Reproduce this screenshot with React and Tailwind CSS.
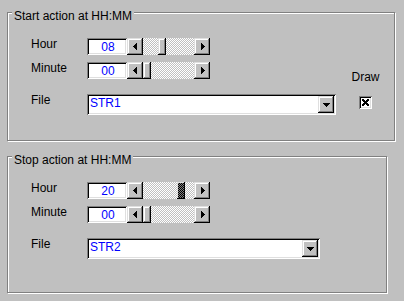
import React from 'react';

const raised =
  'shadow-[inset_-1px_-1px_0_#000,inset_1px_1px_0_#dfdfdf,inset_-2px_-2px_0_#808080,inset_2px_2px_0_#fff]';
const sunken =
  'shadow-[inset_1px_1px_0_#808080,inset_-1px_-1px_0_#fff,inset_2px_2px_0_#000,inset_-2px_-2px_0_#dfdfdf]';
const checker =
  'bg-[conic-gradient(#fff_25%,#c0c0c0_0_50%,#fff_0_75%,#c0c0c0_0)] bg-[length:2px_2px]';

function ArrowLeft() {
  return (
    <svg width="4" height="7" shapeRendering="crispEdges">
      <rect x="0" y="3" width="1" height="1" />
      <rect x="1" y="2" width="1" height="3" />
      <rect x="2" y="1" width="1" height="5" />
      <rect x="3" y="0" width="1" height="7" />
    </svg>
  );
}

function ArrowRight() {
  return (
    <svg width="4" height="7" shapeRendering="crispEdges">
      <rect x="3" y="3" width="1" height="1" />
      <rect x="2" y="2" width="1" height="3" />
      <rect x="1" y="1" width="1" height="5" />
      <rect x="0" y="0" width="1" height="7" />
    </svg>
  );
}

function ArrowDown() {
  return (
    <svg width="7" height="4" shapeRendering="crispEdges">
      <rect x="0" y="0" width="7" height="1" />
      <rect x="1" y="1" width="5" height="1" />
      <rect x="2" y="2" width="3" height="1" />
      <rect x="3" y="3" width="1" height="1" />
    </svg>
  );
}

function ScrollRow({ label, value, thumbClass, focused }) {
  return (
    <div className="flex items-start h-[17px]">
      <div className="w-[56px]">{label}</div>
      <div className={`w-[40px] h-[17px] bg-white ${sunken} flex items-center justify-center pt-[1px] pl-[2px] text-[#0000ff]`}>
        {value}
      </div>
      <div className="w-[83px] h-[17px] flex">
        <div className={`w-[16px] h-[17px] bg-[#c0c0c0] ${raised} flex items-center justify-center pr-[1px]`}>
          <ArrowLeft />
        </div>
        <div className={`flex-1 h-[17px] ${checker}`}>
          {focused ? (
            <div className={`${thumbClass} w-[8px] h-[17px] bg-[conic-gradient(#000_25%,#808080_0_50%,#000_0_75%,#808080_0)] bg-[length:2px_2px] shadow-[inset_-1px_-1px_0_#000,inset_1px_1px_0_#dfdfdf]`} />
          ) : (
            <div className={`${thumbClass} w-[8px] h-[17px] bg-[#c0c0c0] ${raised}`} />
          )}
        </div>
        <div className={`w-[16px] h-[17px] bg-[#c0c0c0] ${raised} flex items-center justify-center pl-[1px]`}>
          <ArrowRight />
        </div>
      </div>
    </div>
  );
}

function Combo({ value, widthClass }) {
  return (
    <div className={`${widthClass} h-[21px] bg-white ${sunken} flex items-start`}>
      <div className="flex-1 pl-[3px] pt-[3px] text-[#0000ff]">{value}</div>
      <div className={`mt-[2px] mr-[2px] w-[16px] h-[17px] bg-[#c0c0c0] ${raised} flex items-center justify-center`}>
        <ArrowDown />
      </div>
    </div>
  );
}

function GroupBox({ title, sizeClass, children }) {
  return (
    <div className={`${sizeClass} border border-[#808080] shadow-[inset_1px_1px_0_#fff,1px_1px_0_#fff] flex flex-col`}>
      <div className="-mt-[3px] ml-[4px] px-[2px] bg-[#c0c0c0] w-fit">{title}</div>
      <div className="pl-[23px] flex flex-col">{children}</div>
    </div>
  );
}

export default function App() {
  return (
    <div className="w-[404px] h-[301px] bg-[#c0c0c0] pl-[7px] pt-[12px] overflow-hidden text-black text-[12px] leading-[13px] font-['Liberation_Sans',Arial,sans-serif]">
      <GroupBox title="Start action at HH:MM" sizeClass="w-[388px] h-[129px]">
        <div className="mt-[15px]">
          <ScrollRow label="Hour" value="08" thumbClass="ml-[15px]" />
        </div>
        <div className="mt-[7px]">
          <ScrollRow label="Minute" value="00" thumbClass="ml-0" />
        </div>
        <div className="mt-[15px] flex items-start">
          <div className="w-[56px]">File</div>
          <Combo value="STR1" widthClass="w-[249px]" />
          <div className="-mt-[23px] ml-[14px] w-[31px] flex flex-col items-center">
            <div>Draw</div>
            <div className={`mt-[12px] w-[13px] h-[13px] bg-white ${sunken} flex items-center justify-center`}>
              <svg width="7" height="7" shapeRendering="crispEdges">
                <path d="M0 0h2v1h-2zM5 0h2v1h-2zM0 1h3v1h-3zM4 1h3v1h-3zM1 2h5v1h-5zM2 3h3v1h-3zM1 4h5v1h-5zM0 5h3v1h-3zM4 5h3v1h-3zM0 6h2v1h-2zM5 6h2v1h-2z" />
              </svg>
            </div>
          </div>
        </div>
      </GroupBox>
      <div className="mt-[15px]">
        <GroupBox title="Stop action at HH:MM" sizeClass="w-[380px] h-[137px]">
          <div className="mt-[15px]">
            <ScrollRow label="Hour" value="20" thumbClass="ml-[34px]" focused />
          </div>
          <div className="mt-[7px]">
            <ScrollRow label="Minute" value="00" thumbClass="ml-0" />
          </div>
          <div className="mt-[15px] flex items-start">
            <div className="w-[56px]">File</div>
            <Combo value="STR2" widthClass="w-[233px]" />
          </div>
        </GroupBox>
      </div>
    </div>
  );
}
